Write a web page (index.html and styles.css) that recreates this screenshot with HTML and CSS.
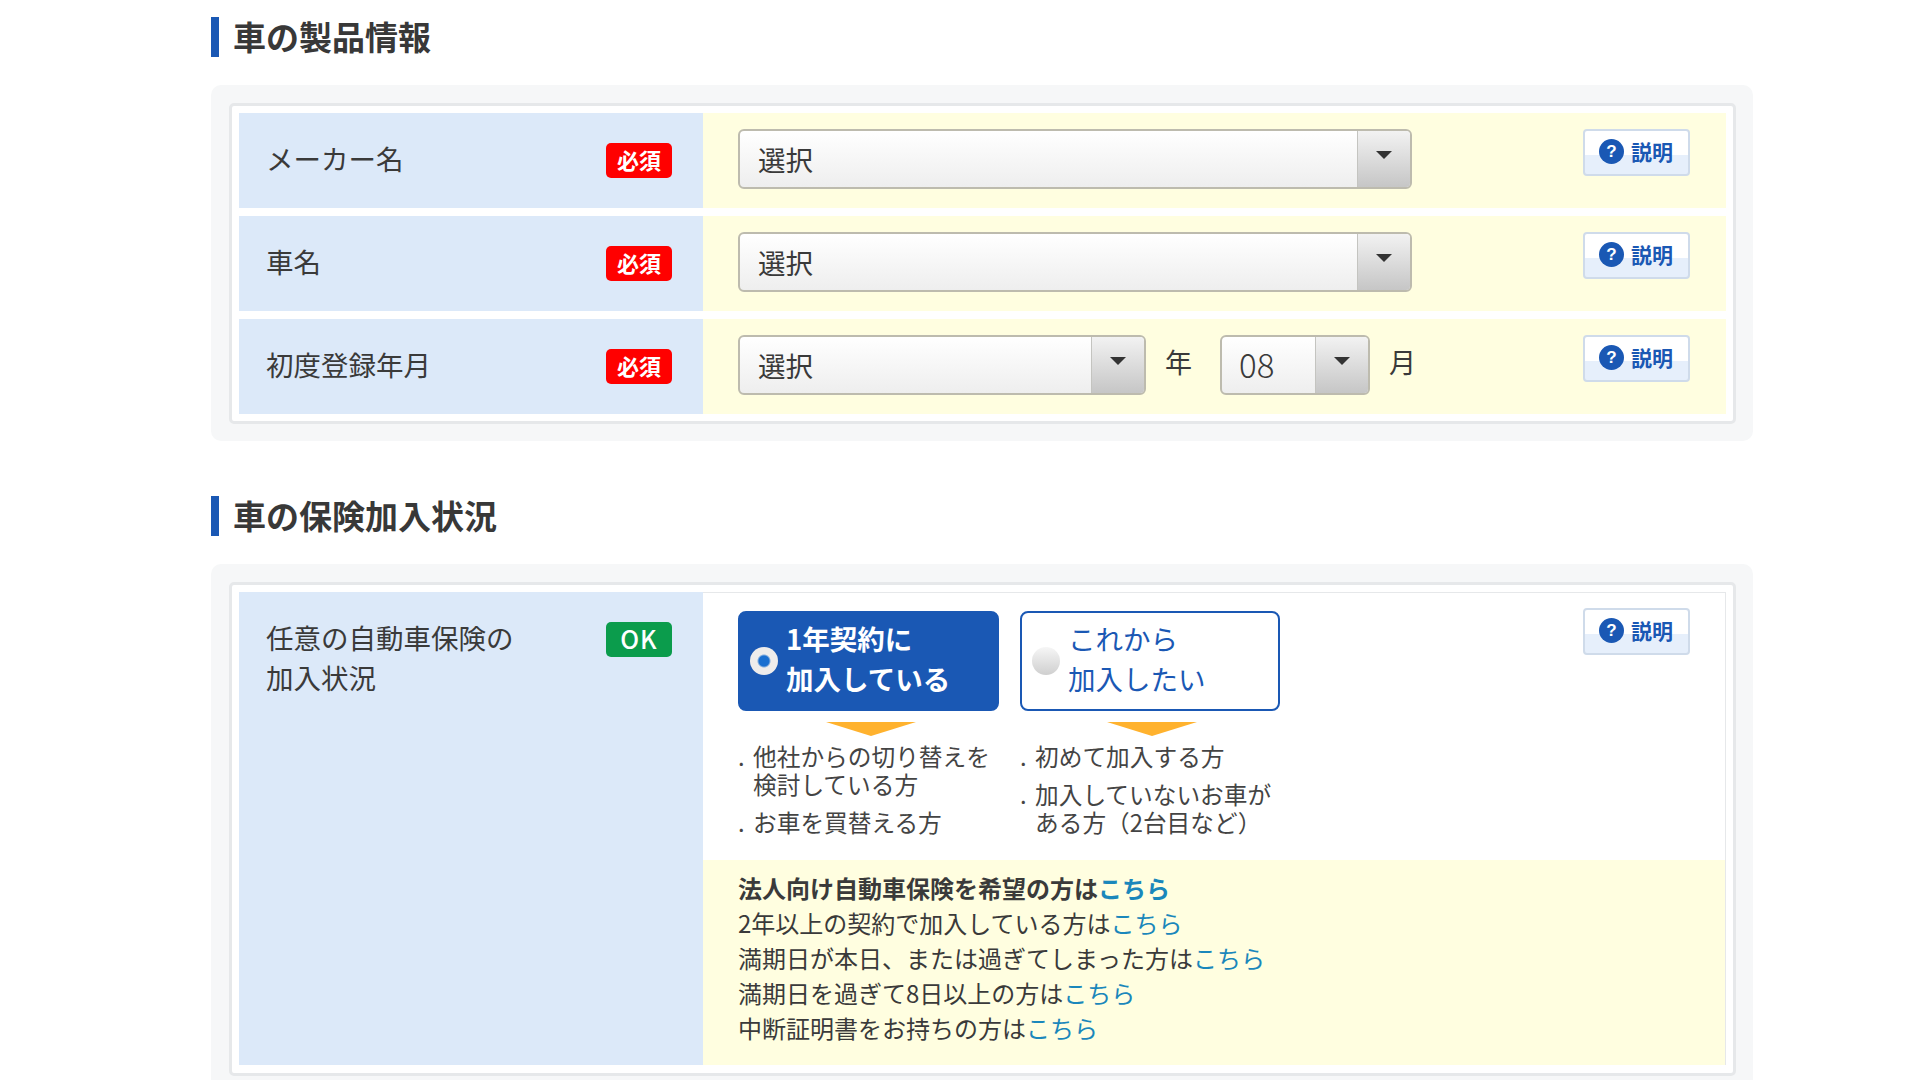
FILE: index.html
```html
<!DOCTYPE html>
<html lang="ja">
<head>
	<meta charset="UTF-8">
	<title>車の製品情報</title>
	<link rel="stylesheet" href="styles.css">
</head>
<body>
	<div class="wrap">
		<h2 class="title">車の製品情報</h2>
		<div class="panel">
			<div class="inner">
				<div class="row">
					<div class="label"><span>メーカー名</span><span class="badge">必須</span></div>
					<div class="field">
						<div class="sel sel-l"><span class="sel-text">選択</span><span class="sel-btn"><i></i></span></div>
						<a class="help"><span class="help-ico">?</span><span>説明</span></a>
					</div>
				</div>
				<div class="row">
					<div class="label"><span>車名</span><span class="badge">必須</span></div>
					<div class="field">
						<div class="sel sel-l"><span class="sel-text">選択</span><span class="sel-btn"><i></i></span></div>
						<a class="help"><span class="help-ico">?</span><span>説明</span></a>
					</div>
				</div>
				<div class="row">
					<div class="label"><span>初度登録年月</span><span class="badge">必須</span></div>
					<div class="field">
						<div class="sel sel-m"><span class="sel-text">選択</span><span class="sel-btn"><i></i></span></div>
						<span class="unit unit-y">年</span>
						<div class="sel sel-s"><span class="sel-text sel-num">08</span><span class="sel-btn"><i></i></span></div>
						<span class="unit unit-m">月</span>
						<a class="help"><span class="help-ico">?</span><span>説明</span></a>
					</div>
				</div>
			</div>
		</div>

		<h2 class="title title2">車の保険加入状況</h2>
		<div class="panel">
			<div class="inner">
				<div class="row row-tall">
					<div class="label label-top"><span>任意の自動車保険の<br>加入状況</span><span class="badge badge-ok">OK</span></div>
					<div class="right">
						<div class="choice">
							<div class="cols">
								<div class="col">
									<div class="radio radio-on"><span class="dot"></span><span class="radio-text">1年契約に<br>加入している</span></div>
									<div class="tri"></div>
									<ul class="list">
										<li><span>他社からの切り替えを<br>検討している方</span></li>
										<li><span>お車を買替える方</span></li>
									</ul>
								</div>
								<div class="col">
									<div class="radio"><span class="dot"></span><span class="radio-text">これから<br>加入したい</span></div>
									<div class="tri"></div>
									<ul class="list">
										<li><span>初めて加入する方</span></li>
										<li><span>加入していないお車が<br>ある方（2台目など）</span></li>
									</ul>
								</div>
							</div>
							<a class="help"><span class="help-ico">?</span><span>説明</span></a>
						</div>
						<div class="notes">
							<p><b>法人向け自動車保険を希望の方は<a>こちら</a></b></p>
							<p>2年以上の契約で加入している方は<a>こちら</a></p>
							<p>満期日が本日、または過ぎてしまった方は<a>こちら</a></p>
							<p>満期日を過ぎて8日以上の方は<a>こちら</a></p>
							<p>中断証明書をお持ちの方は<a>こちら</a></p>
						</div>
					</div>
				</div>
			</div>
		</div>
	</div>
</body>
</html>
```

FILE: styles.css
```css
* { margin:0;padding:0;box-sizing:border-box; }
html,body { height:1080px;overflow:hidden;background:#fff; }
body { font-family:"Noto Sans CJK JP","Liberation Sans",sans-serif;color:#3a3a3a; }
.wrap { width:1542px;margin-left:211px;padding-top:17px; }

.title { height:40px;border-left:8px solid #1a58b4;padding-left:14px;font-size:33px;line-height:38px;font-weight:700;color:#383838; }
.title2 { margin-top:55px; }

.panel { margin-top:28px;padding:18px 17px 17px 18px;background:#f6f7f8;border-radius:10px; }
.inner { padding:7px;background:#fff;border:3px solid #e6e8ea;border-radius:5px;display:flex;flex-direction:column;gap:8px; }

.row { display:grid;grid-template-columns:464px 1fr;height:95px; }
.row-tall { height:473px;margin-bottom:1px; }
.label { background:#dce9f9;padding:0 31px 5px 27px;display:flex;justify-content:space-between;align-items:center;font-size:27.5px;line-height:40px; }
.label-top { align-items:flex-start;padding-top:25px;padding-bottom:0; }
.badge { width:66px;height:35px;background:#f00;border-radius:5px;color:#fff;font-size:22px;line-height:33px;font-weight:700;text-align:center;flex:none;margin-top:5px; }
.badge-ok { background:#0b9c4c;font-size:25px;font-weight:500;letter-spacing:1px;margin-top:5px; }

.field { background:#fffee0;padding:16px 36px 0 35px;display:flex;align-items:flex-start; }
.sel { height:60px;border:2px solid #bdbbae;border-radius:6px;background:linear-gradient(#fff,#eeeeee);display:flex;font-size:27.5px;line-height:56px; }
.sel-l { width:674px; }
.sel-m { width:408px; }
.sel-s { width:150px; }
.sel-text { flex:1;padding-left:18px; }
.sel-num { font-size:33px;font-weight:300;padding-left:17px;line-height:55px; }
.sel-btn { width:53px;flex:none;border-left:1px solid #c4c4c0;border-radius:0 4px 4px 0;background:linear-gradient(#f2f2f2,#c6c6c6);display:flex;justify-content:center;padding-top:20px; }
.sel-btn i { width:0;height:0;border:8px solid transparent;border-top:8px solid #333;border-bottom:0; }
.unit { font-size:27px;line-height:54px; }
.unit-y { margin-left:19px;margin-right:28px; }
.unit-m { margin-left:19px; }

.help { width:107px;height:47px;margin-left:auto;flex:none;border:2px solid #cfdbea;border-radius:4px;background:linear-gradient(#fff 55%,#e6effb 55%);display:flex;align-items:center;padding:0 0 3px 14px;color:#1a58b4;font-size:21px;font-weight:700;gap:7px; }
.help-ico { width:25px;height:25px;border-radius:50%;background:#1a58b4;color:#fff;font-size:17px;line-height:25px;text-align:center;font-family:"Liberation Sans",sans-serif; }

.right { border:1px solid #e6e8ea;border-left:0;border-bottom:0;display:flex;flex-direction:column; }
.choice { height:267px;padding:18px 35px 0;display:flex;align-items:flex-start; }
.cols { display:grid;grid-template-columns:261px 260px;gap:21px; }
.radio { height:100px;border:2px solid #1a58b4;border-radius:8px;display:flex;align-items:center;gap:8px;padding-left:10px;font-size:27.5px;line-height:40px;color:#1a58b4; }
.radio-text { padding-bottom:6px; }
.radio-on { background:#1a58b4;color:#fff;font-weight:700; }
.dot { width:28px;height:28px;border-radius:50%;flex:none;background:linear-gradient(#f6f6f6,#cfcfcf); }
.radio-on .dot { background:radial-gradient(circle,#1a6fd0 0 5px,#eeeceb 7px); }
.tri { width:0;height:0;margin:11px auto 0;border:45px solid transparent;border-top:14px solid #ffb22e;border-bottom:0;position:relative;left:2px; }
.list { list-style:none;margin-top:6px;font-size:23.7px;line-height:28px; }
.list li { display:flex;align-items:baseline;margin-bottom:10px;color:#444; }
.list li::before { content:".";width:15px;flex:none; }
.choice .help { margin-top:-3px; }

.notes { flex:1;background:#fffee0;padding:10px 35px 0;font-size:24px;line-height:35px; }
.notes a { color:#1a87bb; }
.notes b { font-weight:700; }
```
